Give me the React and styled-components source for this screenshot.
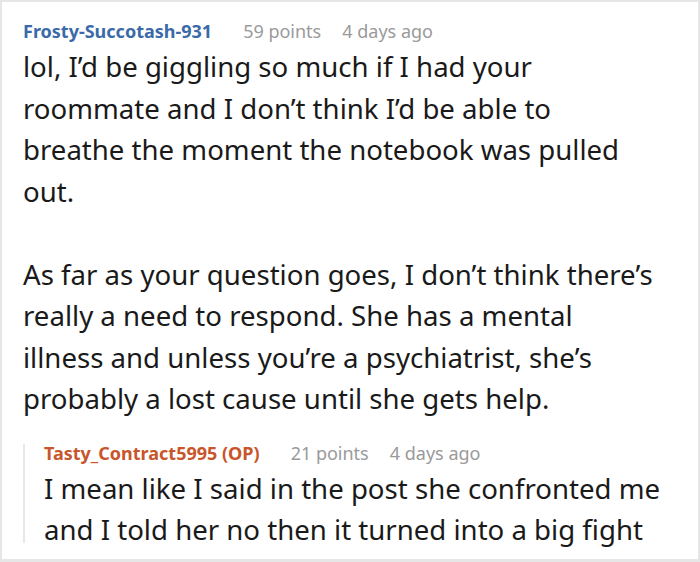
import React from "react";
import styled, { createGlobalStyle } from "styled-components";

const Global = createGlobalStyle`
  html, body { margin: 0; padding: 0; background: #fff; }
  body { font-family: "Noto Sans", "Open Sans", sans-serif; }
`;

const Card = styled.div`
  box-sizing: border-box;
  width: 700px;
  height: 562px;
  border: 2px solid #e6e6e6;
  border-bottom-width: 3px;
  padding: 14px 10px 0 21px;
  overflow: hidden;
  background: #fff;
`;

const Meta = styled.div`
  display: flex;
  align-items: baseline;
  gap: 21px;
  font-size: 18px;
  line-height: 30px;
`;

const Author = styled.span`
  font-weight: 700;
  color: ${(p) => p.$color};
  margin-right: 10px;
`;

const Info = styled.span`
  color: #9a9a9a;
`;

const Body = styled.div`
  font-size: 27.6px;
  line-height: 41.5px;
  color: #1a1a1a;
  white-space: nowrap;
  p { margin: 0; }
  p + p { margin-top: 41.5px; }
`;

const Reply = styled.div`
  position: relative;
  margin-top: 18px;
  padding-left: 21px;
  &::before {
    content: "";
    position: absolute;
    left: 0;
    top: 6px;
    bottom: 8px;
    width: 2px;
    background: #e8e8e8;
  }
`;

export default function App() {
  return (
    <>
      <Global />
      <Card>
        <Meta>
          <Author $color="#3a6aa8">Frosty-Succotash-931</Author>
          <Info>59 points</Info>
          <Info>4 days ago</Info>
        </Meta>
        <Body>
          <p>
            lol, I’d be giggling so much if I had your<br />
            roommate and I don’t think I’d be able to<br />
            breathe the moment the notebook was pulled<br />
            out.
          </p>
          <p>
            As far as your question goes, I don’t think there’s<br />
            really a need to respond. She has a mental<br />
            illness and unless you’re a psychiatrist, she’s<br />
            probably a lost cause until she gets help.
          </p>
        </Body>
        <Reply>
          <Meta>
            <Author $color="#c8562b">Tasty_Contract5995 (OP)</Author>
            <Info>21 points</Info>
            <Info>4 days ago</Info>
          </Meta>
          <Body>
            I mean like I said in the post she confronted me<br />
            and I told her no then it turned into a big fight
          </Body>
        </Reply>
      </Card>
    </>
  );
}
